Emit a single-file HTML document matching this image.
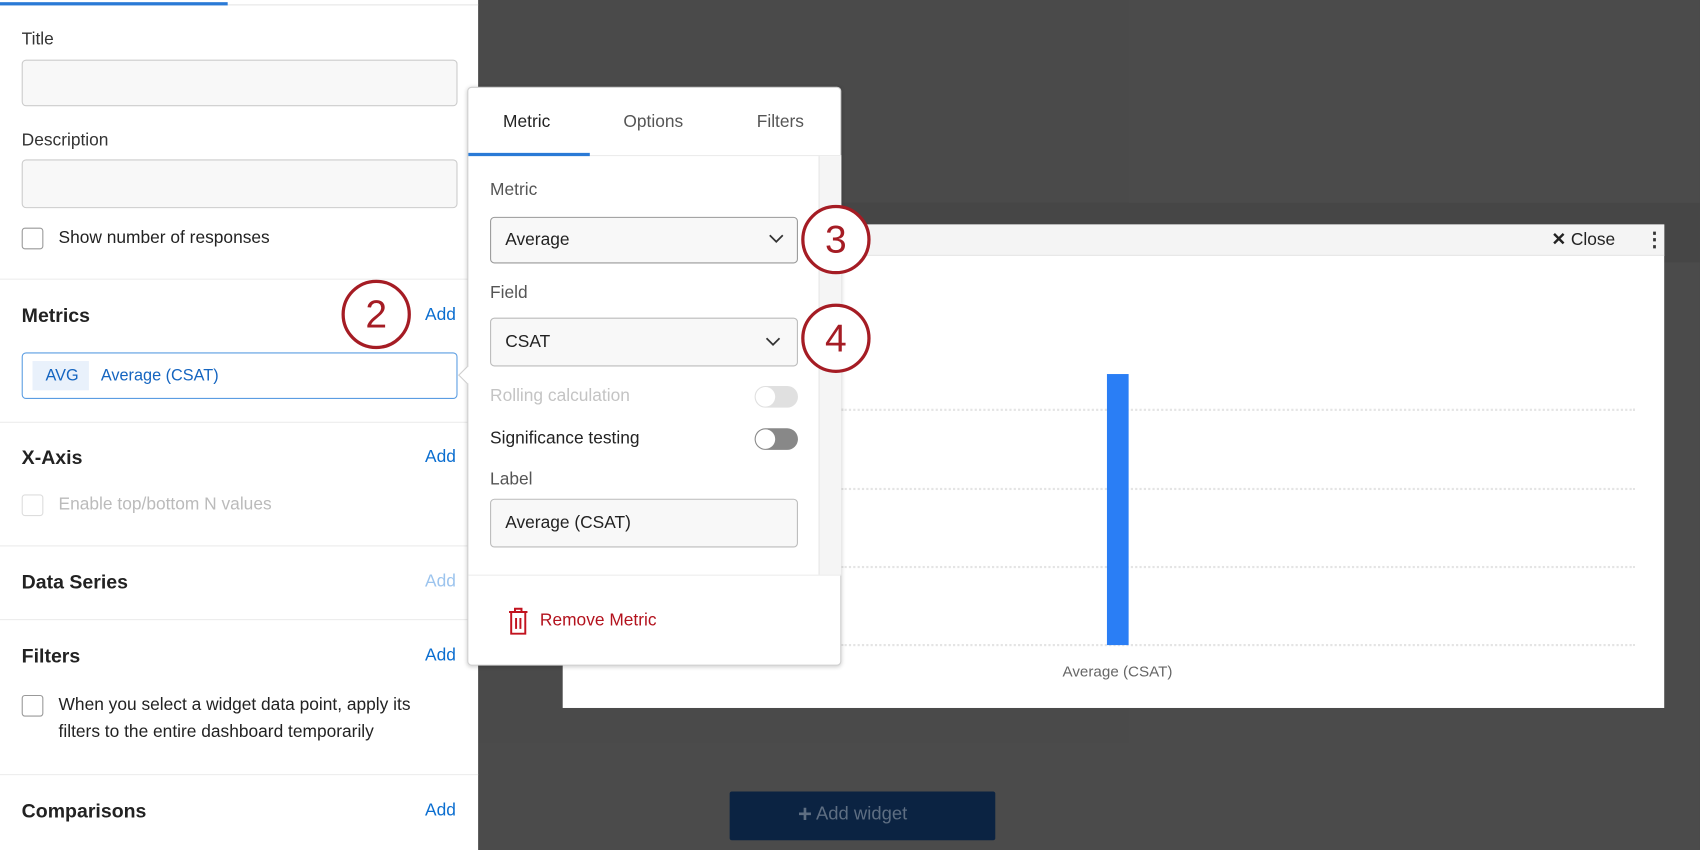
<!DOCTYPE html>
<html><head><meta charset="utf-8"><style>
*{box-sizing:border-box;margin:0;padding:0}
html,body{width:1700px;height:850px;overflow:hidden;background:#4b4b4b}
#w{position:absolute;left:0;top:0;width:1568px;height:784px;transform:scale(1.08418);transform-origin:0 0;font-family:"Liberation Sans",sans-serif;color:#333;background:#4b4b4b}
.a{position:absolute}
.t{position:absolute;font-size:16px;line-height:20px;white-space:nowrap}
.h{position:absolute;font-size:18px;font-weight:bold;line-height:22px;color:#222}
.add{position:absolute;left:392px;font-size:16px;color:#0b6ed0;line-height:20px}
.inp{position:absolute;background:#f8f8f8;border:1px solid #ccc;border-radius:4px}
.cb{position:absolute;left:20px;width:20px;height:20px;border:1.5px solid #999;border-radius:3px;background:#fff}
.div{position:absolute;left:0;width:441px;height:1px;background:#ececec}
.circ{position:absolute;width:64px;height:64px;border:3.5px solid #a51c24;border-radius:50%;background:#fff;color:#a51c24;font-size:36px;line-height:57px;text-align:center}
.grid{position:absolute;left:776px;width:732px;border-top:2px dotted #e4e4e4}
</style></head><body><div id="w">
<div class="a" style="left:441px;top:0;width:600px;height:685px;background:#4a4a4a"></div>
<div class="a" style="left:775px;top:187px;width:793px;height:55px;background:#464646"></div>
<!-- left panel -->
<div class="a" style="left:0;top:0;width:441px;height:784px;background:#fff">
<div class="a" style="left:0;top:4px;width:441px;height:1px;background:#e5e5e5"></div>
<div class="a" style="left:0;top:2px;width:210px;height:3px;background:#2a7ad6"></div>
<div class="t" style="left:20px;top:27px">Title</div>
<div class="inp" style="left:20px;top:55px;width:402px;height:43px"></div>
<div class="t" style="left:20px;top:120px">Description</div>
<div class="inp" style="left:20px;top:147px;width:402px;height:45px"></div>
<div class="cb" style="top:210px"></div>
<div class="t" style="left:54px;top:210px;color:#222">Show number of responses</div>
<div class="div" style="top:257px"></div>
<div class="h" style="left:20px;top:280px">Metrics</div>
<div class="add" style="top:281px">Add</div>
<div class="a" style="left:20px;top:325px;width:402px;height:43px;border:1px solid #5b9de2;border-radius:4px;background:#fff"></div>
<div class="a" style="left:30px;top:333px;width:52px;height:27px;background:#e9f1fb"></div>
<div class="t" style="left:42px;top:337px;font-size:15px;color:#1565c0">AVG</div>
<div class="t" style="left:93px;top:337px;font-size:15px;color:#1565c0">Average (CSAT)</div>
<div class="div" style="top:389px"></div>
<div class="h" style="left:20px;top:411px">X-Axis</div>
<div class="add" style="top:412px">Add</div>
<div class="cb" style="top:456px;border-color:#ddd"></div>
<div class="t" style="left:54px;top:456px;color:#bbb">Enable top/bottom N values</div>
<div class="div" style="top:503px"></div>
<div class="h" style="left:20px;top:526px">Data Series</div>
<div class="add" style="top:527px;color:#9cc4ee">Add</div>
<div class="div" style="top:571px"></div>
<div class="h" style="left:20px;top:594px">Filters</div>
<div class="add" style="top:595px">Add</div>
<div class="cb" style="top:641px"></div>
<div class="t" style="left:54px;top:641px;color:#222">When you select a widget data point, apply its</div>
<div class="t" style="left:54px;top:666px;color:#222">filters to the entire dashboard temporarily</div>
<div class="div" style="top:714px"></div>
<div class="h" style="left:20px;top:737px">Comparisons</div>
<div class="add" style="top:738px">Add</div>
</div>
<div class="circ" style="left:315px;top:258px">2</div>
<!-- widget -->
<div class="a" style="left:519px;top:207px;width:1016px;height:446px;background:#fff">
<div class="a" style="left:0;top:0;width:1016px;height:29px;background:#f4f4f4;border-bottom:1px solid #e6e6e6"></div>
<div class="t" style="left:912px;top:5px;font-size:16px;color:#222"><span style="font-weight:bold">✕</span> Close</div>
<div class="t" style="left:998px;top:4px;font-size:18px;font-weight:bold;color:#333">⋮</div>
</div>
<div class="grid" style="top:377px"></div>
<div class="grid" style="top:450px"></div>
<div class="grid" style="top:522px"></div>
<div class="grid" style="top:594px"></div>
<div class="a" style="left:1021px;top:345px;width:20px;height:250px;background:#2a7ef5"></div>
<div class="t" style="left:980px;top:609px;font-size:14px;color:#666">Average (CSAT)</div>
<!-- add widget -->
<div class="a" style="left:673px;top:730px;width:245px;height:45px;background:#0b2342;border-radius:2px"></div>
<div class="t" style="left:736px;top:741px;font-size:17px;color:#5e6e82"><span style="font-weight:bold;font-size:22px;vertical-align:-2px">+</span> Add widget</div>
<!-- popup -->
<div class="a" style="left:431px;top:80px;width:345px;height:534px;background:#fff;border:1px solid #cfcfcf;border-radius:4px;box-shadow:0 1px 4px rgba(0,0,0,.2)">
<div class="a" style="left:-7px;top:259px;width:12px;height:12px;background:#fff;border-left:1px solid #cfcfcf;border-bottom:1px solid #cfcfcf;transform:rotate(45deg)"></div>
<div class="t" style="left:32px;top:22px;color:#222">Metric</div>
<div class="t" style="left:143px;top:22px;color:#555">Options</div>
<div class="t" style="left:266px;top:22px;color:#555">Filters</div>
<div class="a" style="left:0;top:62px;width:344px;height:1px;background:#ececec"></div>
<div class="a" style="left:0;top:60px;width:112px;height:3px;background:#2a7ad6"></div>
<div class="a" style="left:323px;top:63px;width:21px;height:386px;background:#f5f5f5;border-left:1px solid #e6e6e6"></div>
<div class="a" style="left:0;top:449px;width:344px;height:1px;background:#ececec"></div>
<div class="t" style="left:20px;top:85px;color:#555">Metric</div>
<div class="inp" style="left:20px;top:119px;width:284px;height:43px;border-color:#999"></div>
<div class="t" style="left:34px;top:131px;color:#222">Average</div>
<svg class="a" style="left:277px;top:134px" width="14" height="10"><path d="M1 2l6 6 6-6" fill="none" stroke="#333" stroke-width="1.6"/></svg>
<div class="t" style="left:20px;top:180px;color:#555">Field</div>
<div class="inp" style="left:20px;top:212px;width:284px;height:45px;border-color:#bbb"></div>
<div class="t" style="left:34px;top:225px;color:#222">CSAT</div>
<svg class="a" style="left:274px;top:229px" width="14" height="10"><path d="M1 2l6 6 6-6" fill="none" stroke="#333" stroke-width="1.6"/></svg>
<div class="t" style="left:20px;top:275px;color:#c4c4c4">Rolling calculation</div>
<div class="a" style="left:264px;top:275px;width:40px;height:20px;border-radius:10px;background:#e0e0e0"><div class="a" style="left:1px;top:1px;width:18px;height:18px;border-radius:50%;background:#fff"></div></div>
<div class="t" style="left:20px;top:314px;color:#222">Significance testing</div>
<div class="a" style="left:264px;top:314px;width:40px;height:20px;border-radius:10px;background:#888"><div class="a" style="left:1px;top:1px;width:18px;height:18px;border-radius:50%;background:#fff"></div></div>
<div class="t" style="left:20px;top:352px;color:#555">Label</div>
<div class="inp" style="left:20px;top:379px;width:284px;height:45px;border-color:#bbb"></div>
<div class="t" style="left:34px;top:392px;color:#222">Average (CSAT)</div>
<svg class="a" style="left:36px;top:479px" width="20" height="26" viewBox="0 0 20 26"><path d="M7 4V1.5h6V4M1.5 4.5h17M3.5 5v19.5h13V5M8 10v10M12 10v10" fill="none" stroke="#c2121e" stroke-width="1.8"/></svg>
<div class="t" style="left:66px;top:482px;color:#b3121d">Remove Metric</div>
</div>
<div class="circ" style="left:739px;top:189px">3</div>
<div class="circ" style="left:739px;top:280px">4</div>
</div></body></html>
